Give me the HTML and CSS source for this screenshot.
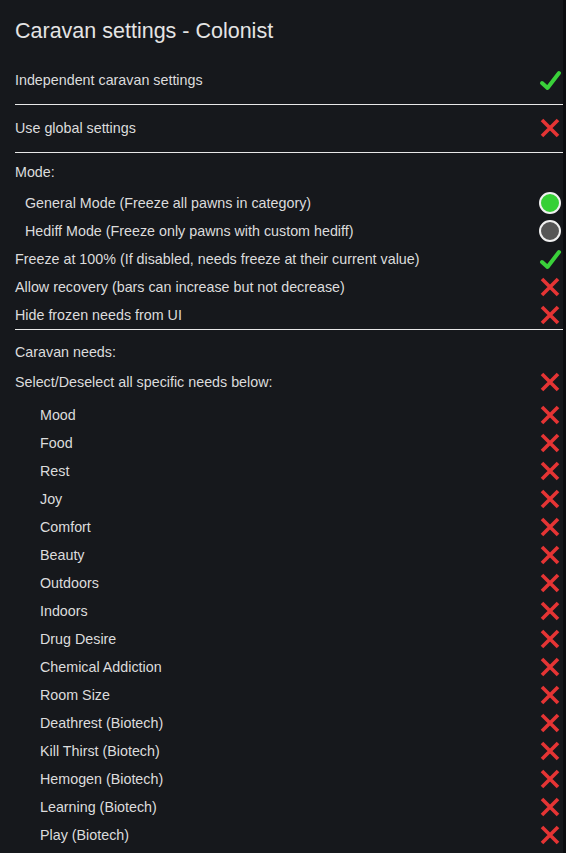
FILE: index.html
```html
<!DOCTYPE html>
<html lang="en">
<head>
  <meta charset="UTF-8">
  <meta name="viewport" content="width=device-width, initial-scale=1.0">
  <title>Caravan settings - Colonist</title>
  <link rel="stylesheet" href="styles.css">
</head>
<body>
  <div class="window">
    <h2 class="title">Caravan settings - Colonist</h2>

    <div class="row first">
      <span>Independent caravan settings</span>
      <svg class="icon" viewBox="0 0 24 24"><polyline class="check" points="4,15 9.5,20 21,5"/></svg>
    </div>
    <div class="divider"></div>

    <div class="row">
      <span>Use global settings</span>
      <svg class="icon" viewBox="0 0 24 24"><path class="cross" d="M4 4 L20 20 M20 4 L4 20"/></svg>
    </div>
    <div class="divider after"></div>

    <div class="row label">Mode:</div>
    <div class="row sub mode-first">
      <span>General Mode (Freeze all pawns in category)</span>
      <span class="radio on"></span>
    </div>
    <div class="row sub">
      <span>Hediff Mode (Freeze only pawns with custom hediff)</span>
      <span class="radio"></span>
    </div>
    <div class="row">
      <span>Freeze at 100% (If disabled, needs freeze at their current value)</span>
      <svg class="icon" viewBox="0 0 24 24"><polyline class="check" points="4,15 9.5,20 21,5"/></svg>
    </div>
    <div class="row">
      <span>Allow recovery (bars can increase but not decrease)</span>
      <svg class="icon" viewBox="0 0 24 24"><path class="cross" d="M4 4 L20 20 M20 4 L4 20"/></svg>
    </div>
    <div class="row">
      <span>Hide frozen needs from UI</span>
      <svg class="icon" viewBox="0 0 24 24"><path class="cross" d="M4 4 L20 20 M20 4 L4 20"/></svg>
    </div>
    <div class="divider tight"></div>

    <div class="row label">Caravan needs:</div>
    <div class="row select-all">
      <span>Select/Deselect all specific needs below:</span>
      <svg class="icon" viewBox="0 0 24 24"><path class="cross" d="M4 4 L20 20 M20 4 L4 20"/></svg>
    </div>

    <div id="needs" class="needs"></div>
  </div>

  <script>
    // 每个需求一行，全部未选中
    const needs = [
      "Mood", "Food", "Rest", "Joy", "Comfort", "Beauty", "Outdoors", "Indoors",
      "Drug Desire", "Chemical Addiction", "Room Size", "Deathrest (Biotech)",
      "Kill Thirst (Biotech)", "Hemogen (Biotech)", "Learning (Biotech)", "Play (Biotech)"
    ];
    const list = document.getElementById("needs");
    needs.forEach(name => {
      const row = document.createElement("div");
      row.className = "row need";
      row.innerHTML = `<span>${name}</span>
        <svg class="icon" viewBox="0 0 24 24"><path class="cross" d="M4 4 L20 20 M20 4 L4 20"/></svg>`;
      list.appendChild(row);
    });
  </script>
</body>
</html>
```

FILE: styles.css
```css
html, body {
  margin: 0;
  height: 100%;
  background-color: #0c0d10;
}

body {
  font-family: 'Liberation Sans', Arial, sans-serif;
  color: #dcdcdc;
  overflow: hidden;
}

/* 主窗口，右侧留一条深色边 */
.window {
  width: 563px;
  min-height: 100%;
  box-sizing: border-box;
  background-color: #16181c;
  padding: 20px 0 0 15px;
}

.title {
  margin: 0 0 24px 0;
  font-size: 21.5px;
  font-weight: normal;
  line-height: 22px;
  color: #e4e4e4;
}

.row {
  display: flex;
  align-items: center;
  justify-content: space-between;
  height: 28px;
  font-size: 14.3px;
  padding-right: 1px;
}

.row.sub {
  padding-left: 10px;
}

.row.mode-first {
  margin-top: 3px;
}

.row.select-all {
  margin-top: 2px;
}

.needs {
  margin-top: 5px;
}

.row.need {
  padding-left: 25px;
}

.divider {
  border-top: 1px solid #e8e8e8;
  margin: 10px 0 9px 0;
}

.divider.after {
  margin-bottom: 5px;
}

.divider.tight {
  margin: 0 0 8px 0;
}

.icon {
  width: 24px;
  height: 24px;
  flex: none;
}

.check {
  fill: none;
  stroke: #3ad13a;
  stroke-width: 4;
  stroke-linecap: round;
  stroke-linejoin: round;
}

.cross {
  fill: none;
  stroke: #e53434;
  stroke-width: 3.6;
  stroke-linecap: butt;
}

/* 单选按钮 */
.radio {
  width: 18px;
  height: 18px;
  border: 2px solid #f0f0f0;
  border-radius: 50%;
  background-color: #565656;
  margin-right: 1px;
  flex: none;
}

.radio.on {
  background-color: #35d035;
}
```
